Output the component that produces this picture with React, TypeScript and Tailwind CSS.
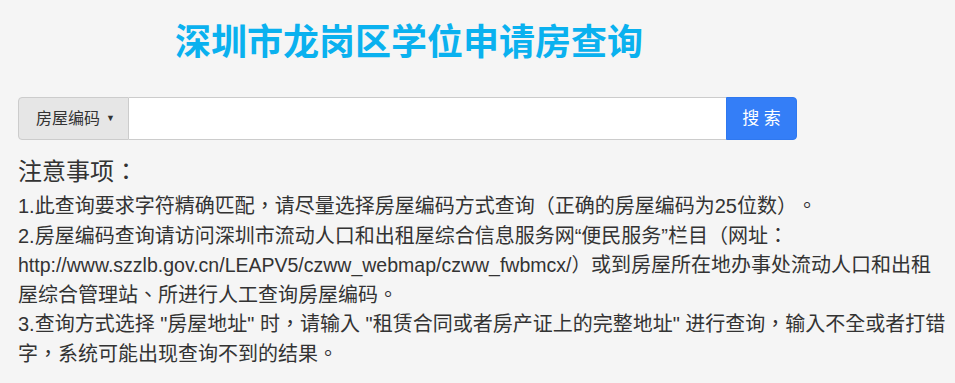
import React from "react";

export default function App() {
  return (
    <div
      className="min-h-screen w-full bg-[#f5f5f5] text-[#333] [text-spacing-trim:space-all]"
      style={{ fontFamily: '"Liberation Sans", "Noto Sans CJK SC", sans-serif' }}
    >
      <h1 className="pl-[175px] pt-[21px] text-[36px] font-bold leading-[44px] text-[#0ab1ef]">
        深圳市龙岗区学位申请房查询
      </h1>

      <div className="ml-[18px] mt-[32px] flex h-[43px] w-[779px]">
        <button className="flex w-[111px] shrink-0 items-center gap-[6px] rounded-l-[4px] border border-[#ccc] bg-[#e6e6e6] pl-[17px] text-[16px] text-[#333]">
          <span>房屋编码</span>
          <span className="text-[9px] leading-none">▼</span>
        </button>
        <input
          type="text"
          className="min-w-0 flex-1 border-y border-[#ccc] bg-white px-3 text-[16px] outline-none"
        />
        <button className="w-[71px] shrink-0 rounded-r-[4px] border border-[#2f78ef] bg-[#347ef7] text-[17px] text-white">
          搜 索
        </button>
      </div>

      <div
        className="pl-[18px] pr-[6px] pt-[17px]"
        style={{ fontFamily: '"Liberation Sans", "Noto Sans CJK TC", sans-serif' }}
      >
        <h4 className="mb-[5px] text-[24px] leading-[30px] text-[#333]">注意事项：</h4>
        <div className="text-[20px] leading-[29.5px] text-[#333]">
          <p>1.此查询要求字符精确匹配，请尽量选择房屋编码方式查询（正确的房屋编码为25位数）。</p>
          <p>
            2.房屋编码查询请访问深圳市流动人口和出租屋综合信息服务网“便民服务”栏目（网址：<span className="text-[19.5px]">http://www.szzlb.gov.cn/LEAPV5/czww_webmap/czww_fwbmcx/）</span>或到房屋所在地办事处流动人口和出租屋综合管理站、所进行人工查询房屋编码。
          </p>
          <p>
            3.查询方式选择 "房屋地址" 时，请输入 "租赁合同或者房产证上的完整地址" 进行查询，输入不全或者打错字，系统可能出现查询不到的结果。
          </p>
        </div>
      </div>
    </div>
  );
}
